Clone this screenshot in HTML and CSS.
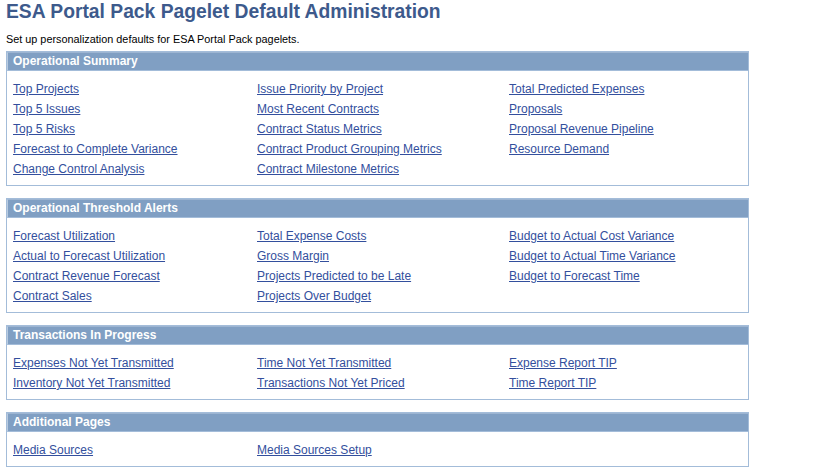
FILE: index.html
```html
<!DOCTYPE html>
<html lang="en">
<head>
<meta charset="UTF-8">
<title>ESA Portal Pack Pagelet Default Administration</title>
<link rel="stylesheet" href="styles.css">
</head>
<body>
<h1 class="page-title">ESA Portal Pack Pagelet Default Administration</h1>
<p class="intro">Set up personalization defaults for ESA Portal Pack pagelets.</p>

<div class="group">
  <div class="group-head">Operational Summary</div>
  <div class="links">
    <a href="#">Top Projects</a>
    <a href="#">Issue Priority by Project</a>
    <a href="#">Total Predicted Expenses</a>
    <a href="#">Top 5 Issues</a>
    <a href="#">Most Recent Contracts</a>
    <a href="#">Proposals</a>
    <a href="#">Top 5 Risks</a>
    <a href="#">Contract Status Metrics</a>
    <a href="#">Proposal Revenue Pipeline</a>
    <a href="#">Forecast to Complete Variance</a>
    <a href="#">Contract Product Grouping Metrics</a>
    <a href="#">Resource Demand</a>
    <a href="#">Change Control Analysis</a>
    <a href="#">Contract Milestone Metrics</a>
  </div>
</div>

<div class="group">
  <div class="group-head">Operational Threshold Alerts</div>
  <div class="links">
    <a href="#">Forecast Utilization</a>
    <a href="#">Total Expense Costs</a>
    <a href="#">Budget to Actual Cost Variance</a>
    <a href="#">Actual to Forecast Utilization</a>
    <a href="#">Gross Margin</a>
    <a href="#">Budget to Actual Time Variance</a>
    <a href="#">Contract Revenue Forecast</a>
    <a href="#">Projects Predicted to be Late</a>
    <a href="#">Budget to Forecast Time</a>
    <a href="#">Contract Sales</a>
    <a href="#">Projects Over Budget</a>
  </div>
</div>

<div class="group">
  <div class="group-head">Transactions In Progress</div>
  <div class="links">
    <a href="#">Expenses Not Yet Transmitted</a>
    <a href="#">Time Not Yet Transmitted</a>
    <a href="#">Expense Report TIP</a>
    <a href="#">Inventory Not Yet Transmitted</a>
    <a href="#">Transactions Not Yet Priced</a>
    <a href="#">Time Report TIP</a>
  </div>
</div>

<div class="group">
  <div class="group-head">Additional Pages</div>
  <div class="links">
    <a href="#">Media Sources</a>
    <a href="#">Media Sources Setup</a>
  </div>
</div>
</body>
</html>
```

FILE: styles.css
```css
body {
  font-family: Arial, "Liberation Sans", sans-serif;
  background-color: #ffffff;
  color: #000000;
  margin: 0;
  padding: 0 6px;
}

.page-title {
  font-size: 19.3px;
  font-weight: bold;
  color: #3d5a8c;
  margin: 0;
  line-height: 23px;
}

.intro {
  font-size: 10.85px;
  margin: 9px 0 5px 0;
  line-height: 14px;
}

.group {
  width: 741px;
  border: 1px solid #a3bcd9;
  margin-bottom: 12px;
}

.group-head {
  height: 17px;
  line-height: 17px;
  background-color: #809fc3;
  border-bottom: 1px solid #a3bcd9;
  border-top: 1px solid #9db5d2;
  border-left: 1px solid #b9cbe0;
  margin: 0;
  color: #ffffff;
  font-size: 12px;
  font-weight: bold;
  padding-left: 5px;
}

.links {
  display: grid;
  grid-template-columns: 244px 252px 1fr;
  padding: 8px 6px 6px 6px;
  font-size: 12px;
  line-height: 20px;
}

.links a {
  color: #334f9d;
  text-decoration: underline;
}
```
